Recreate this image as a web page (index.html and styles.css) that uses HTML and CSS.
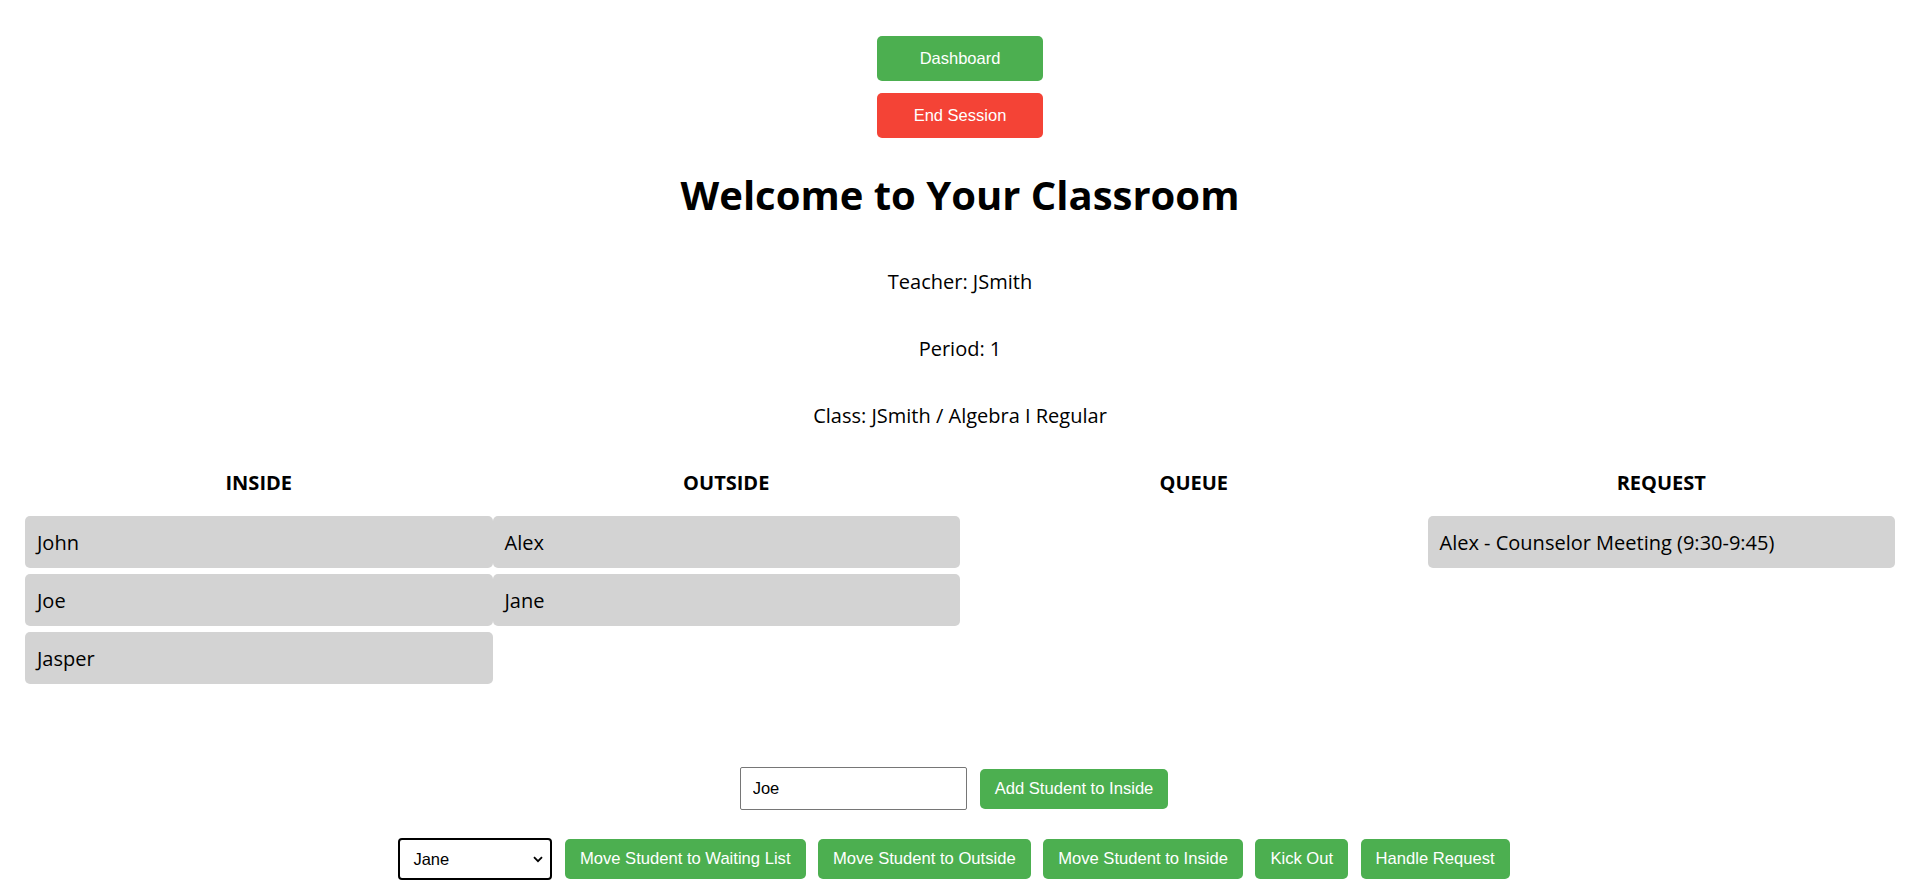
FILE: index.html
```html
<!DOCTYPE html>
<html lang="en">
<head>
<meta charset="utf-8">
<title>Classroom</title>
<link rel="stylesheet" href="styles.css">
</head>
<body>
<div class="page">
  <div class="top-actions">
    <button class="top-btn btn-green">Dashboard</button>
    <button class="top-btn btn-red">End Session</button>
  </div>
  <h1 class="title">Welcome to Your Classroom</h1>
  <div class="info">
    <p>Teacher: JSmith</p>
    <p>Period: 1</p>
    <p>Class: JSmith / Algebra I Regular</p>
  </div>
  <div class="board">
    <div class="column">
      <h3 class="col-title">INSIDE</h3>
      <div class="cards">
        <div class="card">John</div>
        <div class="card">Joe</div>
        <div class="card">Jasper</div>
      </div>
    </div>
    <div class="column">
      <h3 class="col-title">OUTSIDE</h3>
      <div class="cards">
        <div class="card">Alex</div>
        <div class="card">Jane</div>
      </div>
    </div>
    <div class="column">
      <h3 class="col-title">QUEUE</h3>
      <div class="cards"></div>
    </div>
    <div class="column">
      <h3 class="col-title">REQUEST</h3>
      <div class="cards">
        <div class="card">Alex - Counselor Meeting (9:30-9:45)</div>
      </div>
    </div>
  </div>
  <div class="add-row">
    <input class="name-input" type="text" value="Joe">
    <button class="btn btn-green">Add Student to Inside</button>
  </div>
  <div class="action-row">
    <div class="select-wrap">
      <select class="student-select">
        <option>Jane</option>
        <option>Alex</option>
        <option>John</option>
        <option>Joe</option>
        <option>Jasper</option>
      </select>
      <svg class="chev" width="10" height="7" viewBox="0 0 10 7"><path d="M1 1.2 L5 5.2 L9 1.2" fill="none" stroke="#000" stroke-width="1.8"/></svg>
    </div>
    <button class="btn btn-green">Move Student to Waiting List</button>
    <button class="btn btn-green">Move Student to Outside</button>
    <button class="btn btn-green">Move Student to Inside</button>
    <button class="btn btn-green">Kick Out</button>
    <button class="btn btn-green">Handle Request</button>
  </div>
</div>
</body>
</html>
```
FILE: styles.css
```css
* { box-sizing: border-box; }
html, body { margin: 0; padding: 0; background: #fff; }
body {
  font-family: "Open Sans", "Noto Sans", sans-serif;
  font-size: 20px;
  color: #000;
}
.page {
  padding: 36px 24px 0 25px;
}
.top-actions {
  display: flex;
  flex-direction: column;
  align-items: center;
  gap: 12px;
}
.top-btn {
  width: 166px;
  height: 45px;
  border: none;
  border-radius: 5px;
  color: #fff;
  font-family: "Liberation Sans", Arial, sans-serif;
  font-size: 16.5px;
  padding: 0;
}
.btn-green { background: #4caf50; }
.btn-red { background: #f44336; }
.title {
  margin: 29px 0 0;
  text-align: center;
  font-size: 40px;
  font-weight: 700;
  line-height: normal;
}
.info {
  display: flex;
  flex-direction: column;
  align-items: center;
  gap: 40px;
  margin-top: 46px;
}
.info p {
  margin: 0;
  line-height: normal;
}
.board {
  display: grid;
  grid-template-columns: repeat(4, 1fr);
  margin-top: 40px;
}
.col-title {
  margin: 0;
  text-align: center;
  font-size: 20px;
  font-weight: 700;
  line-height: normal;
}
.cards {
  display: flex;
  flex-direction: column;
  gap: 6px;
  margin-top: 20px;
}
.card {
  background: #d3d3d3;
  border-radius: 5px;
  height: 52px;
  padding: 0 12px;
  display: flex;
  align-items: center;
  font-size: 20px;
}
.add-row {
  display: flex;
  justify-content: center;
  align-items: center;
  gap: 13px;
  margin-top: 83px;
  padding-right: 12px;
}
.name-input {
  width: 227px;
  height: 43px;
  border: 1px solid #767676;
  border-radius: 2px;
  padding: 0 12px;
  font-family: "Liberation Sans", Arial, sans-serif;
  font-size: 16.5px;
  color: #000;
}
.btn {
  border: none;
  border-radius: 5px;
  color: #fff;
  font-family: "Liberation Sans", Arial, sans-serif;
  font-size: 16.6px;
  line-height: 20px;
  padding: 10px 15px;
}
.action-row {
  display: flex;
  justify-content: center;
  align-items: center;
  gap: 12.5px;
  margin-top: 28px;
  padding-right: 12px;
}
.select-wrap {
  position: relative;
  width: 154px;
  height: 42px;
}
.student-select {
  appearance: none;
  -webkit-appearance: none;
  width: 100%;
  height: 100%;
  border: 2px solid #000;
  border-radius: 4px;
  background: #fff;
  padding: 0 30px 0 13px;
  font-family: "Liberation Sans", Arial, sans-serif;
  font-size: 16.5px;
  color: #000;
}
.chev {
  position: absolute;
  right: 9px;
  top: 18px;
  pointer-events: none;
}
```
